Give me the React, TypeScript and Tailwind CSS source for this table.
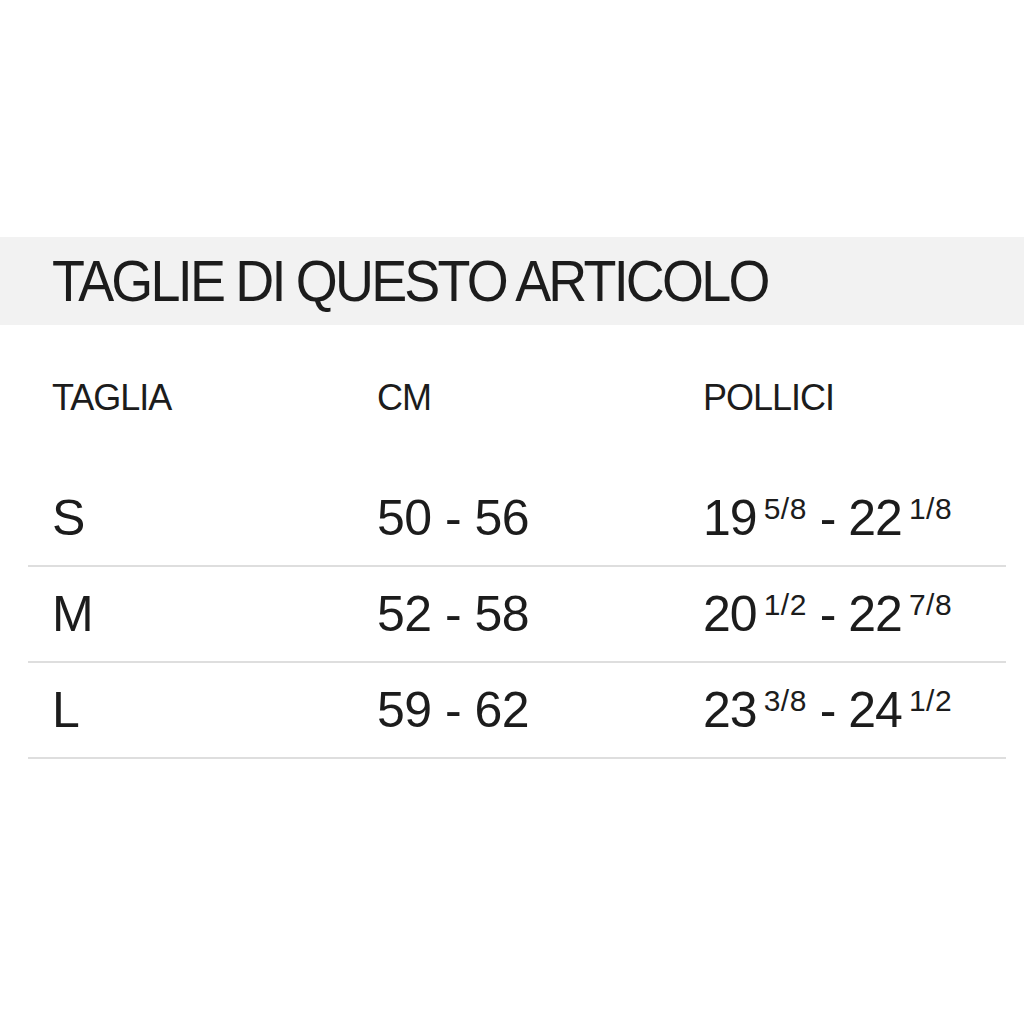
import React from "react";

type Size = {
  label: string;
  cm: string;
  inches: [string, string, string, string];
};

const sizes: Size[] = [
  { label: "S", cm: "50 - 56", inches: ["19", "5/8", "22", "1/8"] },
  { label: "M", cm: "52 - 58", inches: ["20", "1/2", "22", "7/8"] },
  { label: "L", cm: "59 - 62", inches: ["23", "3/8", "24", "1/2"] },
];

const Frac = ({ children }: { children: React.ReactNode }) => (
  <span className="ml-[7px] text-[30px] leading-none tracking-[0.5px] align-[16px]">{children}</span>
);

export default function App() {
  return (
    <div
      className="min-h-screen bg-white pt-[237px] text-[#1c1c1c]"
      style={{ fontFamily: '"Liberation Sans", Arial, sans-serif' }}
    >
      {/* Title band */}
      <div className="flex h-[88px] items-center bg-[#f2f2f2] pl-[52px]">
        <h1 className="origin-left scale-x-[0.93] whitespace-nowrap text-[58px] leading-none tracking-[-3px]">
          TAGLIE DI QUESTO ARTICOLO
        </h1>
      </div>

      {/* Table */}
      <div className="ml-[28px] mr-[18px]">
        <div className="my-[55px] grid grid-cols-[325px_326px_1fr] text-[36px] leading-none tracking-[-1px]">
          <div className="pl-[24px]">TAGLIA</div>
          <div className="pl-[24px]">CM</div>
          <div className="pl-[24px]">POLLICI</div>
        </div>

        {sizes.map((s) => (
          <div
            key={s.label}
            className="grid h-[96px] grid-cols-[325px_326px_1fr] items-center border-b-2 border-[#dedede] text-[50px] leading-none"
          >
            <div className="pl-[24px]">{s.label}</div>
            <div className="pl-[24px] tracking-[-0.5px]">{s.cm}</div>
            <div className="whitespace-nowrap pl-[24px] tracking-[-1px]">
              {s.inches[0]}
              <Frac>{s.inches[1]}</Frac> - {s.inches[2]}
              <Frac>{s.inches[3]}</Frac>
            </div>
          </div>
        ))}
      </div>
    </div>
  );
}
